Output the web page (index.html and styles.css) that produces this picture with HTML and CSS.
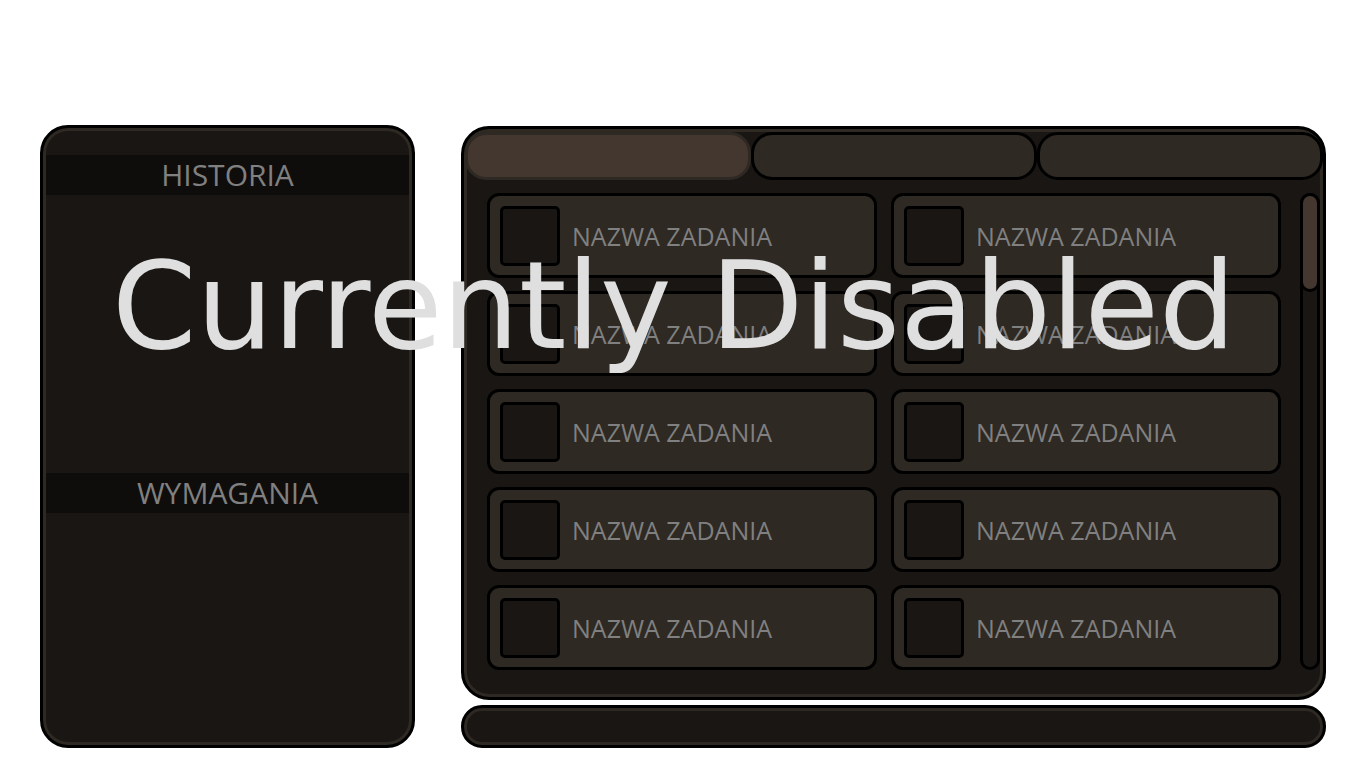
FILE: index.html
```html
<!DOCTYPE html>
<html lang="pl">
<head>
<meta charset="utf-8">
<meta name="viewport" content="width=device-width, initial-scale=1">
<title>Zadania</title>
<link rel="stylesheet" href="styles.css">
</head>
<body>
<main class="page">
  <aside class="panel details">
    <section class="details-section">
      <h2 class="details-title">HISTORIA</h2>
    </section>
    <section class="details-section">
      <h2 class="details-title">WYMAGANIA</h2>
    </section>
  </aside>
  <div class="quests">
    <section class="panel quest-panel">
      <nav class="tabs">
        <button class="tab tab-active" type="button" aria-label="Zakładka 1"></button>
        <button class="tab" type="button" aria-label="Zakładka 2"></button>
        <button class="tab" type="button" aria-label="Zakładka 3"></button>
      </nav>
      <div class="quest-body">
        <div class="quest-grid">
          <button class="quest" type="button"><span class="quest-icon"></span><span>NAZWA ZADANIA</span></button>
          <button class="quest" type="button"><span class="quest-icon"></span><span>NAZWA ZADANIA</span></button>
          <button class="quest" type="button"><span class="quest-icon"></span><span>NAZWA ZADANIA</span></button>
          <button class="quest" type="button"><span class="quest-icon"></span><span>NAZWA ZADANIA</span></button>
          <button class="quest" type="button"><span class="quest-icon"></span><span>NAZWA ZADANIA</span></button>
          <button class="quest" type="button"><span class="quest-icon"></span><span>NAZWA ZADANIA</span></button>
          <button class="quest" type="button"><span class="quest-icon"></span><span>NAZWA ZADANIA</span></button>
          <button class="quest" type="button"><span class="quest-icon"></span><span>NAZWA ZADANIA</span></button>
          <button class="quest" type="button"><span class="quest-icon"></span><span>NAZWA ZADANIA</span></button>
          <button class="quest" type="button"><span class="quest-icon"></span><span>NAZWA ZADANIA</span></button>
        </div>
        <div class="scroll-track"><div class="scroll-thumb"></div></div>
      </div>
    </section>
    <footer class="panel footer-bar"></footer>
  </div>
  <p class="notice">Currently Disabled</p>
</main>
</body>
</html>
```
FILE: styles.css
```css
:root {
  --dark: #1a1613;
  --card: #2e2923;
  --accent: #43372f;
  --text: #808080;
}

* {
  box-sizing: border-box;
}

body {
  margin: 0;
  background: #fff;
  color: var(--text);
  font-family: "Open Sans", "Noto Sans", sans-serif;
}

.page {
  position: relative;
  display: grid;
  grid-template-columns: 375fr 865fr;
  gap: 46px;
  min-height: 100vh;
  padding: 125px 40px 20px;
}

.panel {
  border: 3px solid #000;
  border-radius: 28px;
  background: var(--dark);
  box-shadow: inset 0 0 0 3px var(--card);
}

.details {
  display: grid;
  grid-template-rows: 318fr 269fr;
  padding: 27px 3px 3px;
}

.details-title {
  margin: 0;
  background: #0e0d0b;
  font-size: 30px;
  font-weight: 400;
  line-height: 40px;
  text-align: center;
}

.quests {
  display: flex;
  flex-direction: column;
  gap: 5px;
  padding-top: 1px;
}

.quest-panel {
  flex: 1;
  display: flex;
  flex-direction: column;
  padding: 3px 0 0 1px;
}

.tabs {
  display: grid;
  grid-template-columns: repeat(3, 1fr);
}

.tab {
  height: 48px;
  border: 3px solid #000;
  border-radius: 21px;
  background: var(--card);
}

.tab-active {
  border-color: var(--card);
  background: var(--accent);
}

.quest-body {
  flex: 1;
  display: flex;
  gap: 19px;
  padding: 13px 3px 27px 22px;
}

.quest-grid {
  flex: 1;
  display: grid;
  grid-template-columns: 1fr 1fr;
  gap: 13px 14px;
}

.quest {
  display: flex;
  align-items: center;
  gap: 12px;
  min-height: 85px;
  padding: 0 10px;
  border: 3px solid #000;
  border-radius: 12px;
  background: var(--card);
  color: inherit;
  font: inherit;
  font-size: 25px;
  line-height: 34px;
}

.quest-icon {
  width: 60px;
  height: 60px;
  border: 3px solid #000;
  border-radius: 5px;
  background: var(--dark);
}

.scroll-track {
  width: 20px;
  border-radius: 10px;
  background: var(--dark);
  box-shadow: inset 0 0 0 3px #000;
}

.scroll-thumb {
  height: 99px;
  border: 3px solid #000;
  border-radius: 10px;
  background: var(--accent);
}

.footer-bar {
  height: 43px;
  border-radius: 21px;
}

.notice {
  position: absolute;
  top: 237px;
  left: 112px;
  margin: 0;
  color: #dfdfdf;
  font-family: "DejaVu Sans", sans-serif;
  font-size: 121px;
  line-height: 140px;
  white-space: nowrap;
}
```
